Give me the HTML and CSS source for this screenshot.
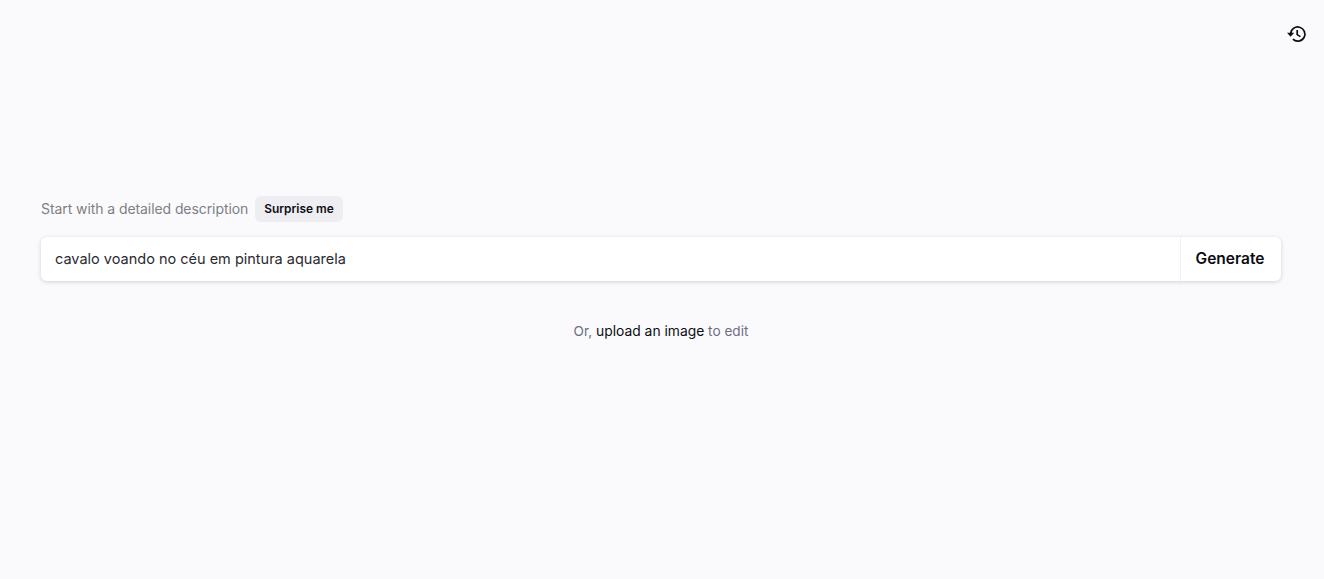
FILE: index.html
```html
<!DOCTYPE html>
<html lang="en">
<head>
  <meta charset="UTF-8" />
  <title>Generate</title>
  <link rel="stylesheet" href="styles.css">
</head>
<body>
<main class="page">
  <header class="top-bar">
    <button class="history-btn" aria-label="History">
      <svg width="20" height="20" viewBox="0 0 20 20" fill="none" stroke="#0d0d12" stroke-width="1.7">
        <path d="M3.7 10a7.1 7.1 0 1 1 2.2 5.2"/>
        <path d="M0 8.8h7.2L3.6 12.8z" fill="#0d0d12" stroke="none"/>
        <path d="M10.2 6v4.6l3.2 2" stroke-width="1.7"/>
      </svg>
    </button>
  </header>

  <section class="prompt">
    <div class="prompt-head">
      <span class="prompt-label">Start with a detailed description</span>
      <button class="surprise-btn">Surprise me</button>
    </div>
    <form class="prompt-box" onsubmit="event.preventDefault();">
      <input class="prompt-input" type="text" value="cavalo voando no céu em pintura aquarela">
      <button class="generate-btn" type="submit">Generate</button>
    </form>
    <p class="upload-note">Or, <a href="#">upload an image</a> to edit</p>
  </section>
</main>
</body>
</html>
```

FILE: styles.css
```css
* { box-sizing: border-box; padding: 0; margin: 0; }
body {
  min-height: 100vh;
  background: #fafafc;
  font-family: Inter, "Noto Sans", sans-serif;
  color: #0d0d12;
}
.page { padding: 0 43px 0 41px; }
.top-bar {
  display: flex;
  justify-content: flex-end;
  height: 196px;
  padding-top: 24px;
}
.history-btn {
  width: 20px; height: 20px;
  margin-right: -26px;
  background: none; border: none; cursor: pointer;
}
.prompt-head {
  display: flex; align-items: center; gap: 7px;
  height: 26px;
  margin-bottom: 15px;
}
.prompt-label { font-size: 14px; letter-spacing: -0.08px; color: #7f7f85; padding-bottom: 1px; }
.surprise-btn {
  height: 26px;
  padding: 0 9px 1px;
  background: #eeeef2;
  border: none; border-radius: 6px;
  font: 600 11.9px Inter, "Noto Sans", sans-serif;
  color: #0d0d12;
  cursor: pointer;
}
.prompt-box {
  display: flex;
  height: 44px;
  background: #fff;
  border-radius: 6px;
  box-shadow: 0 1px 4px rgba(30,30,60,0.18);
}
.prompt-input {
  flex: 1;
  padding: 0 14px 2px;
  border: none; outline: none; background: none;
  font: 400 14.5px Inter, "Noto Sans", sans-serif;
  color: #2a2a30;
}
.generate-btn {
  width: 101px;
  padding: 0 2px 2px 0;
  background: none;
  border: none; border-left: 1px solid #f0f0f3;
  font: 600 15.5px Inter, "Noto Sans", sans-serif;
  color: #0d0d12;
  cursor: pointer;
}
.upload-note {
  margin-top: 42px;
  text-align: center;
  font-size: 13.6px;
  color: #6e6e80;
}
.upload-note a { font-size: 13.85px; color: #0d0d12; text-decoration: none; }
```
